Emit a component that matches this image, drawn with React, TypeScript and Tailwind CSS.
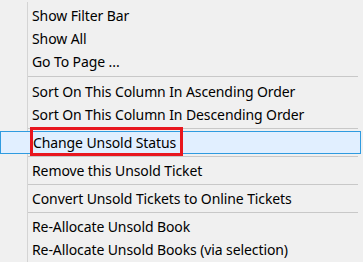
import React from 'react'

type Entry = { label: string; active?: boolean } | 'sep' | 'sep-wide'

const ITEMS: Entry[] = [
  { label: 'Show Filter Bar' },
  { label: 'Show All' },
  { label: 'Go To Page ...' },
  'sep-wide',
  { label: 'Sort On This Column In Ascending Order' },
  { label: 'Sort On This Column In Descending Order' },
  'sep',
  { label: 'Change Unsold Status', active: true },
  'sep',
  { label: 'Remove this Unsold Ticket' },
  'sep',
  { label: 'Convert Unsold Tickets to Online Tickets' },
  'sep',
  { label: 'Re-Allocate Unsold Book' },
  { label: 'Re-Allocate Unsold Books (via selection)' },
]

const Separator: React.FC<{ wide?: boolean }> = ({ wide }) => (
  <div className={`flex items-center pl-[28px] pr-[3px] ${wide ? 'h-[7px]' : 'h-[5px]'}`}>
    <div className="h-px w-full bg-[#c8c8c8]" />
  </div>
)

export default function App() {
  return (
    <div
      className="relative w-[363px] h-[262px] overflow-hidden bg-[#f0f0f0] text-black"
      style={{ fontFamily: '"Noto Sans", "Open Sans", sans-serif' }}
    >
      {/* icon gutter line */}
      <div className="absolute left-[27px] top-[2px] bottom-0 w-px bg-[#d4d4d4]" />

      <div className="relative flex flex-col pt-[4px] pr-[2px]">
        {ITEMS.map((it, i) => {
          if (it === 'sep') return <Separator key={i} />
          if (it === 'sep-wide') return <Separator key={i} wide />
          return (
            <div
              key={i}
              className={`relative flex items-center h-[23px] pl-[32px] text-[14px] leading-none ${
                it.active ? 'bg-[#e1efff] border border-[#2f9be0] pl-[31px]' : ''
              }`}
            >
              <span className="tracking-[-0.1px]">{it.label}</span>
              {it.active && (
                <div className="absolute left-[29px] top-[-5px] w-[153px] h-[29px] border-[3px] border-[#e8161e]" />
              )}
            </div>
          )
        })}
      </div>
    </div>
  )
}
